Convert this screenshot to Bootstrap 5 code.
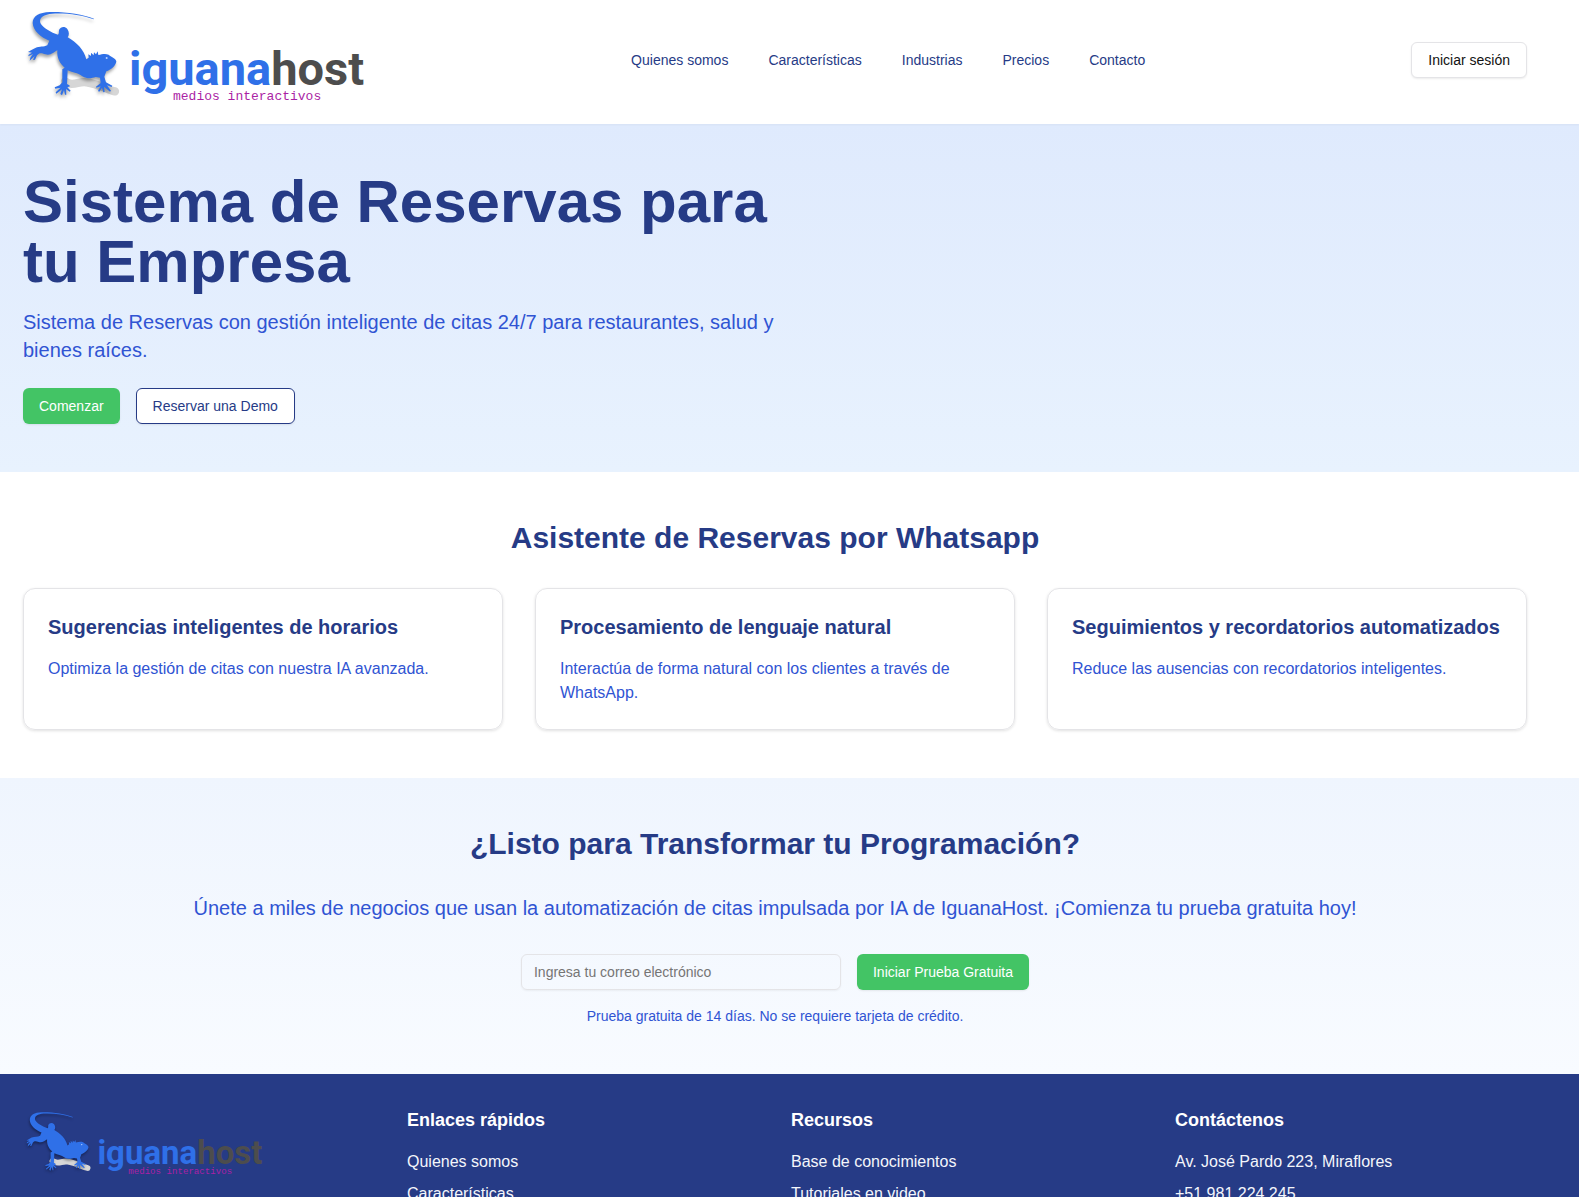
<!DOCTYPE html>
<html lang="es">
<head>
<meta charset="utf-8">
<meta name="viewport" content="width=device-width, initial-scale=1">
<title>IguanaHost</title>
<link href="https://cdn.jsdelivr.net/npm/bootstrap@5.3.0/dist/css/bootstrap.min.css" rel="stylesheet">
<style>
:root { --navy: #263b86; --royal: #3054d3; --leaf: #43c465; --line: #e4e4e7; }
body { font-family: "Liberation Sans", Arial, sans-serif; color: #111; line-height: 24px; scrollbar-width: none; }
.shell { padding-left: 23px; padding-right: 52px; }
.site-header { min-height: 124px; padding-bottom: 4px; box-shadow: 0 1px 2px rgba(0,0,0,.04); }
.logo-large { width: 342px; height: 114px; }
.logo-small { width: 240px; height: 80px; }
.menu { gap: 40px; font-size: 14px; line-height: 20px; }
.menu a { color: var(--navy); }
.action { font-size: 14px; line-height: 20px; padding: 7px 16px; border-radius: 6px; box-shadow: 0 1px 2px rgba(0,0,0,.08); }
.action-plain { border-color: var(--line); background: #fff; color: #111; }
.action-leaf { border: 0; padding: 8px 16px; background: var(--leaf); color: #fff; }
.action-demo { border-color: var(--navy); background: #fff; color: var(--navy); }
.hero { background: linear-gradient(#dfeafd, #e8f2fe); }
.hero h1 { font-size: 60px; line-height: 60px; }
.hero p, .intro { font-size: 20px; line-height: 28px; }
.section-pad { padding-top: 48px; padding-bottom: 48px; }
h1, h2, h3 { color: var(--navy); font-weight: 700; }
h2 { font-size: 30px; line-height: 36px; }
.royal { color: var(--royal); }
.features { --bs-gutter-x: 32px; --bs-gutter-y: 32px; }
.feature { border: 1px solid var(--line); border-radius: 12px; box-shadow: 0 1px 3px rgba(0,0,0,.12); }
.feature h3 { font-size: 20px; line-height: 28px; }
.cta { background: linear-gradient(#eff5fe, #f8fbff); }
.email { width: 320px; height: 36px; font-size: 14px; line-height: 20px; padding: 7px 12px; border-color: var(--line); border-radius: 6px; background: transparent; box-shadow: 0 1px 2px rgba(0,0,0,.05); }
.email::placeholder { color: #757575; }
.note { font-size: 14px; line-height: 20px; }
.site-footer { background: var(--navy); padding-top: 32px; padding-bottom: 32px; }
.site-footer .row { --bs-gutter-x: 32px; }
.site-footer h3 { color: #fff; font-size: 18px; line-height: 28px; }
.site-footer a, .site-footer li { color: #f4f6fb; }
.wordmark { font: 700 47px Roboto, "Liberation Sans", sans-serif; }
.tagline { font: 13px "Liberation Mono", monospace; fill: #ab1fa5; }
.lizard { filter: drop-shadow(-2px 8px 5px rgba(0,0,0,.35)); }
</style>
<script src="https://cdn.jsdelivr.net/npm/bootstrap@5.3.0/dist/js/bootstrap.bundle.min.js"></script>
</head>
<body class="vh-100 overflow-auto">

<svg width="0" height="0" class="position-absolute" aria-hidden="true">
  <symbol id="logo" viewBox="0 0 342 114">
    <g transform="translate(-8 -3) scale(.3333)">
      <path d="M150 244 C175 262 190 242 215 247 C250 252 275 268 300 274" fill="none" stroke="#d6d6d6" stroke-width="25" stroke-linecap="round"/>
      <g class="lizard" fill="#2f70e8">
        <path d="M237 56 C205 43 150 35 105 36 C72 37 53 48 53 69 C54 92 78 113 103 122 L97 136 C86 142 75 138 61 144 L48 151 L39 156 L51 158 L41 164 L40 169 L54 162 L46 173 L44 182 L59 168 L54 180 L60 179 L66 166 C73 157 80 159 91 163 C107 168 117 156 127 151 C125 173 135 192 149 203 L142 208 L142 247 L134 256 L119 262 L121 266 L137 263 L122 277 L124 281 L141 268 L136 282 L141 286 L147 270 L150 284 L154 284 L153 267 L164 275 L167 272 L157 262 L165 259 L163 256 L156 252 L158 211 C173 219 187 217 202 229 C220 239 231 234 242 231 L255 233 L257 249 L243 260 L244 263 L257 259 L249 273 L253 275 L261 263 L265 277 L269 276 L267 260 L285 275 L288 272 L276 256 L290 261 L292 257 L273 247 L268 230 L274 214 C286 211 304 196 304 184 C303 176 290 172 281 164 C270 160 261 163 250 165 L248 154 L243 163 L237 157 L236 166 L228 158 L228 168 L220 163 L221 173 L214 178 C207 150 185 127 158 112 C163 106 163 95 157 87 C149 78 137 80 132 90 C131 97 133 101 129 104 C109 98 83 83 76 69 C71 52 88 43 112 41 C153 39 200 44 236 58 Z"/>
      </g>
      <circle cx="275" cy="174" r="3" fill="#b9d2ff"/>
    </g>
    <text class="wordmark" x="106" y="82" fill="#2f70e8">iguana<tspan fill="#4d4d4d">host</tspan></text>
    <text class="tagline" x="150" y="97">medios interactivos</text>
  </symbol>
</svg>

<header class="site-header shell position-relative bg-white d-flex align-items-center justify-content-between">
  <a href="#" aria-label="iguanahost"><svg class="logo-large d-block"><use href="#logo"/></svg></a>
  <nav class="menu d-flex">
    <a class="text-decoration-none" href="#">Quienes somos</a>
    <a class="text-decoration-none" href="#">Características</a>
    <a class="text-decoration-none" href="#">Industrias</a>
    <a class="text-decoration-none" href="#">Precios</a>
    <a class="text-decoration-none" href="#">Contacto</a>
  </nav>
  <button type="button" class="btn action action-plain">Iniciar sesión</button>
</header>

<main>
  <section class="hero shell section-pad">
    <div class="row g-0">
      <div class="col-lg-6">
        <h1 class="mb-3">Sistema de Reservas para tu Empresa</h1>
        <p class="royal mb-4">Sistema de Reservas con gestión inteligente de citas 24/7 para restaurantes, salud y bienes raíces.</p>
        <div class="d-flex gap-3">
          <button type="button" class="btn action action-leaf">Comenzar</button>
          <button type="button" class="btn action action-demo">Reservar una Demo</button>
        </div>
      </div>
    </div>
  </section>

  <section class="shell section-pad bg-white">
    <h2 class="text-center pb-4 mb-2">Asistente de Reservas por Whatsapp</h2>
    <div class="row features mt-0">
      <div class="col-md-4 mt-0"><article class="feature h-100 p-4">
        <h3 class="mb-3">Sugerencias inteligentes de horarios</h3>
        <p class="royal mb-0">Optimiza la gestión de citas con nuestra IA avanzada.</p>
      </article></div>
      <div class="col-md-4 mt-0"><article class="feature h-100 p-4">
        <h3 class="mb-3">Procesamiento de lenguaje natural</h3>
        <p class="royal mb-0">Interactúa de forma natural con los clientes a través de WhatsApp.</p>
      </article></div>
      <div class="col-md-4 mt-0"><article class="feature h-100 p-4">
        <h3 class="mb-3">Seguimientos y recordatorios automatizados</h3>
        <p class="royal mb-0">Reduce las ausencias con recordatorios inteligentes.</p>
      </article></div>
    </div>
  </section>

  <section class="cta shell section-pad text-center">
    <h2 class="pb-4 mb-2">¿Listo para Transformar tu Programación?</h2>
    <p class="intro royal pb-4 mb-2">Únete a miles de negocios que usan la automatización de citas impulsada por IA de IguanaHost. ¡Comienza tu prueba gratuita hoy!</p>
    <form class="d-flex justify-content-center gap-3 mb-3">
      <input id="email" type="email" class="form-control email" aria-label="Correo electrónico" placeholder="Ingresa tu correo electrónico">
      <button type="button" class="btn action action-leaf">Iniciar Prueba Gratuita</button>
    </form>
    <p class="note royal mb-0">Prueba gratuita de 14 días. No se requiere tarjeta de crédito.</p>
  </section>
</main>

<footer class="site-footer shell">
  <div class="row">
    <div class="col-3"><a href="#" aria-label="iguanahost"><svg class="logo-small d-block"><use href="#logo"/></svg></a></div>
    <div class="col-3">
      <h3 class="mb-3">Enlaces rápidos</h3>
      <ul class="list-unstyled d-flex flex-column gap-2 mb-0">
        <li><a class="text-decoration-none" href="#">Quienes somos</a></li>
        <li><a class="text-decoration-none" href="#">Características</a></li>
      </ul>
    </div>
    <div class="col-3">
      <h3 class="mb-3">Recursos</h3>
      <ul class="list-unstyled d-flex flex-column gap-2 mb-0">
        <li><a class="text-decoration-none" href="#">Base de conocimientos</a></li>
        <li><a class="text-decoration-none" href="#">Tutoriales en video</a></li>
      </ul>
    </div>
    <div class="col-3">
      <h3 class="mb-3">Contáctenos</h3>
      <ul class="list-unstyled d-flex flex-column gap-2 mb-0">
        <li>Av. José Pardo 223, Miraflores</li>
        <li>+51 981 224 245</li>
      </ul>
    </div>
  </div>
</footer>
</body>
</html>
